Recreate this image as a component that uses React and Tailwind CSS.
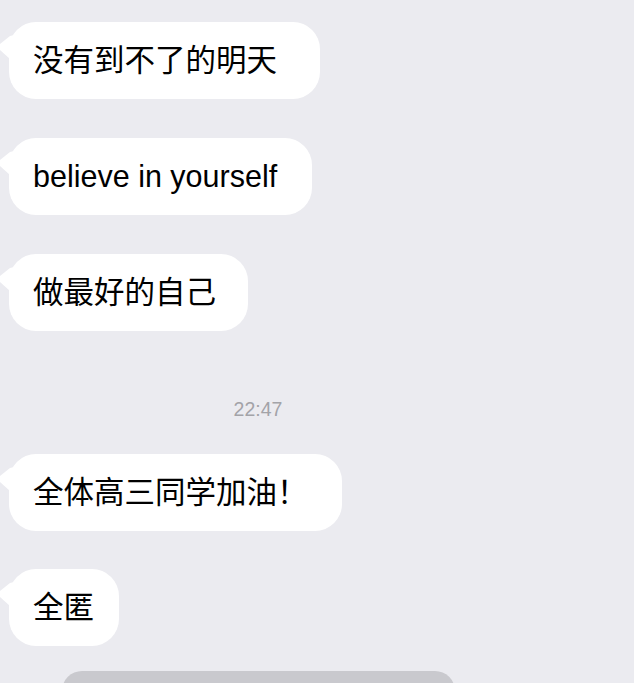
import React from 'react';

const before = [
  { id: 1, text: '没有到不了的明天', width: 'w-[311px]' },
  { id: 2, text: 'believe in yourself', width: 'w-[303px]' },
  { id: 3, text: '做最好的自己', width: 'w-[239px]' }
];

const after = [
  { id: 4, text: '全体高三同学加油！', width: 'w-[333px]' },
  { id: 5, text: '全匿', width: 'w-[110px]' }
];

function Bubble({ text, width }) {
  return (
    <div className={`relative ${width} h-[77px] bg-white rounded-[27px] flex items-center pl-6`}>
      {/* little tail on the left */}
      <svg
        className="absolute -left-[9px] top-[12px]"
        width="14"
        height="28"
        viewBox="0 0 14 28"
      >
        <path d="M0 10 L10 2 L14 1 L14 26 L10 25 L0 16 Z" fill="#ffffff" />
      </svg>
      <span className="text-[30.5px] leading-none text-black whitespace-nowrap">{text}</span>
    </div>
  );
}

export default function App() {
  return (
    <div
      className="w-[634px] h-[683px] overflow-hidden bg-[#ebebf0] pt-[22px] pl-[9px]"
      style={{ fontFamily: '"Liberation Sans", "Noto Sans CJK SC", sans-serif' }}
    >
      <div className="flex flex-col gap-[39px]">
        {before.map((m) => (
          <Bubble key={m.id} text={m.text} width={m.width} />
        ))}
      </div>

      <div className="mt-[66px] mb-[33px] w-[498px] text-center text-[19.5px] leading-[24px] text-[#a3a3a8]">
        22:47
      </div>

      <div className="flex flex-col gap-[38px]">
        {after.map((m) => (
          <Bubble key={m.id} text={m.text} width={m.width} />
        ))}
      </div>

      <div className="mt-[25px] ml-[53px] w-[393px] h-[40px] rounded-[22px] bg-[#c9c9ce]" />
    </div>
  );
}
